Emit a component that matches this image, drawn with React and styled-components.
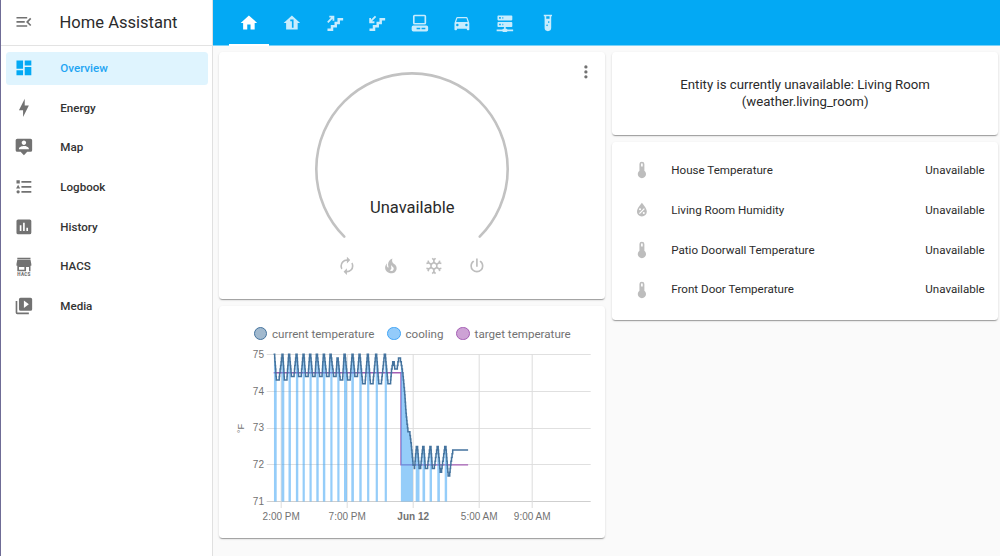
import React from "react";
import styled, { createGlobalStyle } from "styled-components";

const Global = createGlobalStyle`
  *, *::before { box-sizing: border-box; }
  html, body { margin: 0; padding: 0; }
  body {
    width: 1000px;
    height: 556px;
    overflow: hidden;
    background: #fafafa;
    color: #2b2b2b;
    font-family: Roboto, "Noto Sans", sans-serif;
    font-size: 11.6px;
  }
`;

const P = {
  menuOpen:
    "M21,15.61L19.59,17L14.58,12L19.59,7L21,8.39L17.44,12L21,15.61M3,6H16V8H3V6M3,13V11H13V13H3M3,18V16H16V18H3Z",
  dashboard: "M13,3V9H21V3M13,21H21V11H13M3,21H11V15H3M3,13H11V3H3V13Z",
  bolt: "M11 15H6L13 1V9H18L11 23V15Z",
  account:
    "M20 2H4A2 2 0 0 0 2 4V16A2 2 0 0 0 4 18H8L12 22L16 18H20A2 2 0 0 0 22 16V4A2 2 0 0 0 20 2M12 4.3C13.5 4.3 14.7 5.5 14.7 7S13.5 9.7 12 9.7 9.3 8.5 9.3 7 10.5 4.3 12 4.3M18 15H6V14.1C6 12.1 10 11 12 11S18 12.1 18 14.1V15Z",
  list: "M5,9.5L7.5,14H2.5L5,9.5M3,4H7V8H3V4M5,20A2,2 0 0,0 7,18A2,2 0 0,0 5,16A2,2 0 0,0 3,18A2,2 0 0,0 5,20M9,5V7H21V5H9M9,19H21V17H9V19M9,13H21V11H9V13Z",
  chart:
    "M19,3H5A2,2 0 0,0 3,5V19A2,2 0 0,0 5,21H19A2,2 0 0,0 21,19V5A2,2 0 0,0 19,3M9,17H7V10H9V17M13,17H11V7H13V17M17,17H15V13H17V17Z",
  media:
    "M4,6H2V20A2,2 0 0,0 4,22H18V20H4V6M20,2H8A2,2 0 0,0 6,4V16A2,2 0 0,0 8,18H20A2,2 0 0,0 22,16V4A2,2 0 0,0 20,2M12,14.5V5.5L18,10L12,14.5Z",
  home: "M10,20V14H14V20H19V12H22L12,3L2,12H5V20H10Z",
  homeFloor: "M12,3L2,12H5V20H19V12H22L12,3M10,8H14V18H12V10H10V8Z",
  car: "M5,11L6.5,6.5H17.5L19,11M17.5,16A1.5,1.5 0 0,1 16,14.5A1.5,1.5 0 0,1 17.5,13A1.5,1.5 0 0,1 19,14.5A1.5,1.5 0 0,1 17.5,16M6.5,16A1.5,1.5 0 0,1 5,14.5A1.5,1.5 0 0,1 6.5,13A1.5,1.5 0 0,1 8,14.5A1.5,1.5 0 0,1 6.5,16M18.92,6C18.72,5.42 18.16,5 17.5,5H6.5C5.84,5 5.28,5.42 5.08,6L3,12V20A1,1 0 0,0 4,21H5A1,1 0 0,0 6,20V19H18V20A1,1 0 0,0 19,21H20A1,1 0 0,0 21,20V12L18.92,6Z",
  server:
    "M13,19H14A1,1 0 0,1 15,20H22V22H15A1,1 0 0,1 14,23H10A1,1 0 0,1 9,22H2V20H9A1,1 0 0,1 10,19H11V17H4A1,1 0 0,1 3,16V12A1,1 0 0,1 4,11H20A1,1 0 0,1 21,12V16A1,1 0 0,1 20,17H13V19M4,3H20A1,1 0 0,1 21,4V8A1,1 0 0,1 20,9H4A1,1 0 0,1 3,8V4A1,1 0 0,1 4,3M9,7H10V5H9V7M9,15H10V13H9V15M5,5V7H7V5H5M5,13V15H7V13H5Z",
  tube: "M7,2V4H8V18A4,4 0 0,0 12,22A4,4 0 0,0 16,18V4H17V2H7M11,16C10.4,16 10,15.6 10,15C10,14.4 10.4,14 11,14C11.6,14 12,14.4 12,15C12,15.6 11.6,16 11,16M13,12C12.4,12 12,11.6 12,11C12,10.4 12.4,10 13,10C13.6,10 14,10.4 14,11C14,11.6 13.6,12 13,12M14,7H10V4H14V7Z",
  dots: "M12,16A2,2 0 0,1 14,18A2,2 0 0,1 12,20A2,2 0 0,1 10,18A2,2 0 0,1 12,16M12,10A2,2 0 0,1 14,12A2,2 0 0,1 12,14A2,2 0 0,1 10,12A2,2 0 0,1 12,10M12,4A2,2 0 0,1 14,6A2,2 0 0,1 12,8A2,2 0 0,1 10,6A2,2 0 0,1 12,4Z",
  auto: "M12,6V9L16,5L12,1V4A8,8 0 0,0 4,12C4,13.57 4.46,15.03 5.24,16.26L6.7,14.8C6.25,13.97 6,13 6,12A6,6 0 0,1 12,6M18.76,7.74L17.3,9.2C17.74,10.04 18,11 18,12A6,6 0 0,1 12,18V15L8,19L12,23V20A8,8 0 0,0 20,12C20,10.43 19.54,8.97 18.76,7.74Z",
  fire: "M17.66 11.2C17.43 10.9 17.15 10.64 16.89 10.38C16.22 9.78 15.46 9.35 14.82 8.72C13.33 7.26 13 4.85 13.95 3C13 3.23 12.17 3.75 11.46 4.32C8.87 6.4 7.85 10.07 9.07 13.22C9.11 13.32 9.15 13.42 9.15 13.55C9.15 13.77 9 13.97 8.8 14.05C8.57 14.15 8.33 14.09 8.14 13.93C8.08 13.88 8.04 13.83 8 13.76C6.87 12.33 6.69 10.28 7.45 8.64C5.78 10 4.87 12.3 5 14.47C5.06 14.97 5.12 15.47 5.29 15.97C5.43 16.57 5.7 17.17 6 17.7C7.08 19.43 8.95 20.67 10.96 20.92C13.1 21.19 15.39 20.8 17.03 19.32C18.86 17.66 19.5 15 18.56 12.72L18.43 12.46C18.22 12 17.66 11.2 17.66 11.2M14.5 17.5C14.22 17.74 13.76 18 13.4 18.1C12.28 18.5 11.16 17.94 10.5 17.28C11.69 17 12.4 16.12 12.61 15.23C12.78 14.43 12.46 13.77 12.33 13C12.21 12.26 12.23 11.63 12.5 10.94C12.69 11.32 12.89 11.7 13.13 12C13.9 13 15.11 13.44 15.37 14.8C15.41 14.94 15.43 15.08 15.43 15.23C15.46 16.05 15.1 16.95 14.5 17.5Z",
  snow: "M20.79,13.95L18.46,14.57L16.46,13.44V10.56L18.46,9.43L20.79,10.05L21.31,8.12L19.54,7.65L20,5.88L18.07,5.36L17.45,7.69L15.45,8.82L13,7.38V5.12L14.71,3.41L13.29,2L12,3.29L10.71,2L9.29,3.41L11,5.12V7.38L8.5,8.82L6.5,7.69L5.92,5.36L4,5.88L4.47,7.65L2.7,8.12L3.22,10.05L5.55,9.43L7.55,10.56V13.45L5.55,14.58L3.22,13.96L2.7,15.89L4.47,16.36L4,18.12L5.93,18.64L6.55,16.31L8.55,15.18L11,16.62V18.88L9.29,20.59L10.71,22L12,20.71L13.29,22L14.7,20.59L13,18.88V16.62L15.5,15.17L17.5,16.3L18.12,18.63L20,18.12L19.53,16.35L21.3,15.88L20.79,13.95M9.5,10.56L12,9.11L14.5,10.56V13.44L12,14.89L9.5,13.44V10.56Z",
  power:
    "M16.56,5.44L15.11,6.89C16.84,7.94 18,9.83 18,12A6,6 0 0,1 12,18A6,6 0 0,1 6,12C6,9.83 7.16,7.94 8.88,6.88L7.44,5.44C5.36,6.88 4,9.28 4,12A8,8 0 0,0 12,20A8,8 0 0,0 20,12C20,9.28 18.64,6.88 16.56,5.44M13,3H11V13H13",
  thermo:
    "M15 13V5A3 3 0 0 0 9 5V13A5 5 0 1 0 15 13M12 4A1 1 0 0 1 13 5V8H11V5A1 1 0 0 1 12 4Z",
  humidity:
    "M12,3.25C12,3.25 6,10 6,14C6,17.32 8.69,20 12,20A6,6 0 0,0 18,14C18,10 12,3.25 12,3.25M14.47,9.97L15.53,11.03L9.53,17.03L8.47,15.97M9.75,10A1.25,1.25 0 0,1 11,11.25A1.25,1.25 0 0,1 9.75,12.5A1.25,1.25 0 0,1 8.5,11.25A1.25,1.25 0 0,1 9.75,10M14.25,14.5A1.25,1.25 0 0,1 15.5,15.75A1.25,1.25 0 0,1 14.25,17A1.25,1.25 0 0,1 13,15.75A1.25,1.25 0 0,1 14.25,14.5Z",
  desktop:
    "M5.6,2H17.6A2,2 0 0,1 19.6,4V12A2,2 0 0,1 17.6,14H5.6A2,2 0 0,1 3.6,12V4A2,2 0 0,1 5.6,2M5.6,4V12H17.6V4H5.6M4,15.2H20A2,2 0 0,1 22,17.2V20.4A2,2 0 0,1 20,22.4H4A2,2 0 0,1 2,20.4V17.2A2,2 0 0,1 4,15.2M8,17.8V19.6H12.4V17.8H8M14,17.8V19.6H18.6V17.8H14Z",
};

const Svg = styled.svg`
  display: block;
  flex: none;
  width: 19.8px;
  height: 19.8px;
  fill: currentColor;
`;

const Lines = styled.g`
  fill: none;
  stroke: currentColor;
  stroke-width: 2.2;
`;

const Icon = ({ name }) => {
  if (name === "stairsUp" || name === "stairsDown")
    return (
      <Svg viewBox="0 0 24 24">
        <Lines>
          <path d="M3 20.2H8.5V16H13V12H16.6V7.5H22" strokeWidth="3" />
          {name === "stairsUp" ? (
            <path d="M3.4 11.4L9.4 5M5.2 4.4H10.2V9.4" />
          ) : (
            <path d="M10.4 4.2L4.4 10.2M3.8 6V11.2H9" />
          )}
        </Lines>
      </Svg>
    );
  if (name === "hacs")
    return (
      <Svg viewBox="0 0 24 24">
        <path
          fillRule="evenodd"
          d="M4 1H20V2.8H4ZM4 3.4H20L21 8.6V10.6H3V8.6ZM4 10.6H20V17.2H4ZM6 12.2V15.6H12.6V12.2ZM14.6 12.2V17.2H18.2V12.2Z"
        />
        <text
          x="12"
          y="23"
          textAnchor="middle"
          fontSize="5.6"
          fontWeight="900"
          textLength="16"
          fontFamily="Roboto, sans-serif"
        >
          HACS
        </text>
      </Svg>
    );
  return (
    <Svg viewBox="0 0 24 24">
      <path fillRule="evenodd" d={P[name]} />
    </Svg>
  );
};

const Page = styled.div`
  display: flex;
  width: 1000px;
  height: 556px;
  border-left: 1px solid #6f6c96;
`;

const Sidebar = styled.aside`
  flex: none;
  width: 212px;
  background: #fff;
  border-right: 1px solid #e0e0e0;
`;

const Brand = styled.div`
  display: flex;
  align-items: center;
  gap: 25.6px;
  height: 45.5px;
  padding-left: 13.2px;
  border-bottom: 1px solid #e3e3e3;
  color: #727272;
`;

const BrandName = styled.span`
  color: #2b2b2b;
  font-size: 16.54px;
`;

const Menu = styled.nav`
  display: flex;
  flex-direction: column;
  gap: 6.7px;
  padding: 6px 4.4px 0 5px;
`;

const MenuItem = styled.a`
  display: flex;
  align-items: center;
  gap: 26.3px;
  height: 33px;
  padding-left: 8.2px;
  border-radius: 3.5px;
  background: ${(p) => (p.$active ? "#dff4fe" : "transparent")};
  color: ${(p) => (p.$active ? "#03a9f4" : "#727272")};
`;

const MenuText = styled.span`
  color: ${(p) => (p.$active ? "#1fa5f3" : "#333")};
  font-size: 11.6px;
  font-weight: 500;
`;

const Main = styled.main`
  flex: 1;
  min-width: 0;
`;

const Tabs = styled.header`
  display: flex;
  gap: 2.6px;
  height: 46px;
  padding-left: 16.3px;
  background: #03a9f4;
  border-bottom: 1px solid #7bd2f8;
`;

const Tab = styled.div`
  display: flex;
  align-items: center;
  justify-content: center;
  width: 40px;
  height: 46px;
  padding-top: 1px;
  color: ${(p) => (p.$active ? "#fff" : "#c8ecfd")};
  border-bottom: 2px solid ${(p) => (p.$active ? "#fff" : "transparent")};
`;

const Columns = styled.div`
  display: grid;
  grid-template-columns: 386px 386px;
  gap: 6.8px;
  padding: 6px 0 0 6.3px;
  align-items: start;
`;

const Column = styled.div`
  display: flex;
  flex-direction: column;
  gap: 6.5px;
`;

const Card = styled.section`
  background: #fff;
  border-radius: 3.5px;
  box-shadow: 0 2px 1px -1px rgba(0, 0, 0, 0.2), 0 1px 1px rgba(0, 0, 0, 0.14),
    0 1px 2.5px rgba(0, 0, 0, 0.12);
`;

const Thermostat = styled(Card)`
  position: relative;
  display: flex;
  flex-direction: column;
  align-items: center;
  height: 247px;
  padding-top: 16.8px;
`;

const MoreButton = styled.span`
  position: absolute;
  top: 10px;
  right: 9.8px;
  color: #727272;
`;

const Dial = styled.div`
  display: grid;
  place-items: center;
  width: 200px;
  height: 180px;
  > * { grid-area: 1 / 1; }
`;

const DialArc = styled.svg`
  width: 200px;
  height: 180px;
  fill: none;
  stroke: #c2c2c2;
  stroke-width: 2.6;
  stroke-linecap: round;
`;

const DialText = styled.span`
  padding-top: 97px;
  font-size: 16.54px;
`;

const Modes = styled.div`
  display: flex;
  gap: 23.6px;
  padding-top: 7.5px;
  color: #bdbdbd;
`;

const Graph = styled(Card)`
  height: 232.5px;
  padding-top: 20.5px;
`;

const Legend = styled.div`
  display: flex;
  justify-content: center;
  gap: 13px;
  height: 15px;
  color: #727272;
  font-size: 11.6px;
`;

const Key = styled.span`
  display: flex;
  align-items: center;
  gap: 5px;
  &::before {
    content: "";
    width: 13.2px;
    height: 13.2px;
    border: 1px solid ${(p) => p.$line};
    border-radius: 50%;
    background: ${(p) => p.$fill};
  }
`;

const Plot = styled.svg`
  display: block;
  width: 386px;
  height: 190px;
  font-family: "Liberation Sans", Arial, sans-serif;
  font-size: 10px;
  fill: #727272;
`;

const Notice = styled(Card)`
  display: flex;
  align-items: center;
  justify-content: center;
  height: 83px;
  padding: 0 60px;
  font-size: 13.23px;
  line-height: 16.5px;
  text-align: center;
`;

const Entities = styled(Card)`
  display: flex;
  flex-direction: column;
  gap: 6.7px;
  height: 178.5px;
  padding: 12.4px 13.4px;
`;

const Entity = styled.div`
  display: flex;
  align-items: center;
  height: 33px;
  padding-left: 6.4px;
  color: #bdbdbd;
`;

const EntityName = styled.span`
  flex: 1;
  padding-left: 19.6px;
  color: #2b2b2b;
`;

const EntityState = styled.span`
  color: #2b2b2b;
`;

/* Chart geometry, in page pixels. */
const yOf = (t) => 354.3 + (75 - t) * 36.85;

const peaks = [274.3, 282.7, 289.3, 296.7, 303.7, 310.3, 317, 324, 330.7, 337.7, 344.7, 352.7, 359.7, 368, 376.3, 385];
const troughs = [277.8, 285.8, 292.8, 300, 307, 314, 321, 328, 335, 341.6, 349, 356.3, 364, 371.8, 380.2, 389.4];
const lows = [74.3, 74.3, 74.4, 74.4, 74.4, 74.4, 74.4, 74.4, 74.4, 74.3, 74.3, 74.4, 74.2, 74.2, 74.2, 74.2];

const keys = [];
peaks.forEach((x, i) => {
  const top = i === 9 ? 74.9 : 75;
  keys.push([x - 0.4, top], [x + 0.4, top], [troughs[i] - 1.2, lows[i]], [troughs[i] + 1.2, lows[i]]);
});
keys.push(
  [391.8, 74.6], [393, 74.8], [394, 74.8], [395, 74.6], [397, 74.6], [398.8, 74.9], [400, 74.9],
  [401.6, 74.7], [403.3, 74.4], [405, 73.9], [406, 73.5], [407.3, 73.1], [408.2, 72.9], [410.2, 72.8],
  [411.6, 72.5], [413.3, 71.95], [414.6, 71.9], [416.6, 72.5], [417.6, 72.5], [419.4, 71.9], [420.6, 71.9],
  [423, 72.5], [424, 72.5], [425.6, 71.9], [427.4, 71.9], [430.2, 72.5], [431, 72.5], [432.6, 71.9],
  [434.2, 71.9], [437.4, 72.5], [438.2, 72.5], [440.4, 71.8], [441.4, 71.8], [445, 72.5], [446, 72.5],
  [448.4, 71.7], [449.6, 71.7], [451.2, 72.1], [453, 72.4], [468.4, 72.4]
);

const stepped = [];
let last = null;
for (let k = 0; k < keys.length - 1; k++) {
  const [x0, t0] = keys[k];
  const [x1, t1] = keys[k + 1];
  const n = Math.max(1, Math.round(Math.abs(t1 - t0) * 10));
  for (let s = 0; s <= n; s++) {
    const x = x0 + ((x1 - x0) * s) / n;
    const y = yOf(Math.round((t0 + ((t1 - t0) * s) / n) * 10) / 10);
    if (last !== null) stepped.push([x, last]);
    stepped.push([x, y]);
    last = y;
  }
}
const line = "M" + stepped.map(([x, y]) => x.toFixed(1) + " " + y.toFixed(1)).join("L");
const area = line + "L468.4 501.7L274 501.7Z";

const cooling = [
  [274.2, 2.8], [281.8, 2.8], [288.8, 2.4], [296.2, 2.4], [302.9, 2.2], [309.8, 2.2], [316.6, 2.4], [323.2, 2.4],
  [330.6, 2.2], [337.6, 2.2], [344.3, 3], [351.6, 2.6], [359.6, 2.4], [367.4, 2.2], [376, 2.2], [385, 2.2],
  [401.2, 12], [416, 3.8], [422.8, 2.6], [429.9, 2.4], [437.6, 2.6], [445, 2.4],
];

const xTicks = [
  [281.5, "2:00 PM"], [347.5, "7:00 PM"], [413.5, "Jun 12"], [479.5, "5:00 AM"], [532.5, "9:00 AM"],
];

const Chart = () => (
  <Plot viewBox="219.3 341 386 190">
    <defs>
      <clipPath id="under">
        <path d={area} />
      </clipPath>
    </defs>
    {[75, 74, 73, 72, 71].map((t) => (
      <g key={t}>
        <path d={`M267 ${Math.floor(yOf(t)) + 0.5}H591`} stroke={t === 71 ? "#cfcfcf" : "#e0e0e0"} />
        <text x="264.3" y={yOf(t) + 3.4} textAnchor="end">{t}</text>
      </g>
    ))}
    {xTicks.map(([x, label]) => (
      <g key={label}>
        <path d={`M${x} 354V508`} stroke="#dcdcdc" />
        <text x={x} y="519.6" textAnchor="middle" fontWeight={label === "Jun 12" ? 700 : 400}>{label}</text>
      </g>
    ))}
    <text transform="translate(244 428.5) rotate(-90)" textAnchor="middle" fontSize="9.4">°F</text>
    <path d="M274 372.7H401.3V464.9H468.4" fill="none" stroke="#a55fb5" strokeWidth="1.4" />
    <g clipPath="url(#under)" fill="#42a5f5" fillOpacity="0.56">
      {cooling.map(([x, w]) => (
        <rect key={x} x={x} y="354" width={w} height="147.7" />
      ))}
    </g>
    <path d={line} fill="none" stroke="#44739e" strokeWidth="1.5" />
  </Plot>
);

const menu = [
  ["dashboard", "Overview"], ["bolt", "Energy"], ["account", "Map"], ["list", "Logbook"],
  ["chart", "History"], ["hacs", "HACS"], ["media", "Media"],
];
const tabs = ["home", "homeFloor", "stairsUp", "stairsDown", "desktop", "car", "server", "tube"];
const entities = [
  ["thermo", "House Temperature"], ["humidity", "Living Room Humidity"],
  ["thermo", "Patio Doorwall Temperature"], ["thermo", "Front Door Temperature"],
];

export default function App() {
  return (
    <>
      <Global />
      <Page>
        <Sidebar>
          <Brand>
            <Icon name="menuOpen" />
            <BrandName>Home Assistant</BrandName>
          </Brand>
          <Menu>
            {menu.map(([icon, label], i) => (
              <MenuItem key={label} $active={i === 0}>
                <Icon name={icon} />
                <MenuText $active={i === 0}>{label}</MenuText>
              </MenuItem>
            ))}
          </Menu>
        </Sidebar>
        <Main>
          <Tabs>
            {tabs.map((t, i) => (
              <Tab key={t} $active={i === 0}>
                <Icon name={t} />
              </Tab>
            ))}
          </Tabs>
          <Columns>
            <Column>
              <Thermostat>
                <MoreButton>
                  <Icon name="dots" />
                </MoreButton>
                <Dial>
                  <DialArc viewBox="0 0 200 180">
                    <path d="M32.3 167.7A95.7 95.7 0 1 1 167.7 167.7" />
                  </DialArc>
                  <DialText>Unavailable</DialText>
                </Dial>
                <Modes>
                  {["auto", "fire", "snow", "power"].map((m) => (
                    <Icon key={m} name={m} />
                  ))}
                </Modes>
              </Thermostat>
              <Graph>
                <Legend>
                  <Key $line="#44739e" $fill="#a1b9ce">current temperature</Key>
                  <Key $line="#42a5f5" $fill="#93cbfa">cooling</Key>
                  <Key $line="#a55fb5" $fill="#cda2d5">target temperature</Key>
                </Legend>
                <Chart />
              </Graph>
            </Column>
            <Column>
              <Notice>Entity is currently unavailable: Living Room (weather.living_room)</Notice>
              <Entities>
                {entities.map(([icon, label]) => (
                  <Entity key={label}>
                    <Icon name={icon} />
                    <EntityName>{label}</EntityName>
                    <EntityState>Unavailable</EntityState>
                  </Entity>
                ))}
              </Entities>
            </Column>
          </Columns>
        </Main>
      </Page>
    </>
  );
}
